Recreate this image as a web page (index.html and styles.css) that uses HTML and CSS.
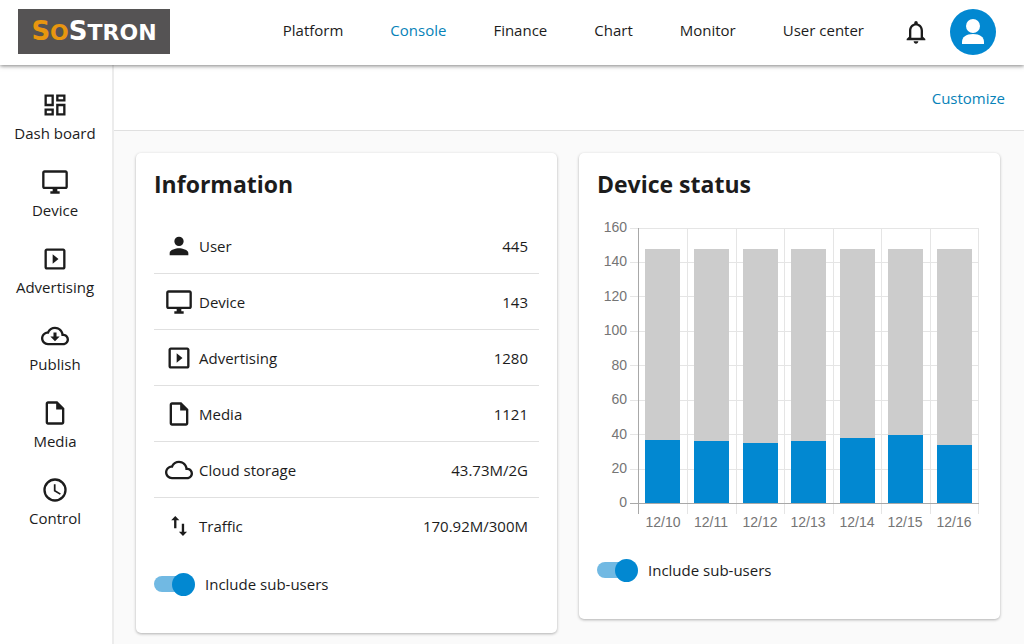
FILE: index.html
```html
<!DOCTYPE html>
<html lang="en">
<head>
<meta charset="utf-8">
<meta name="viewport" content="width=device-width, initial-scale=1">
<title>Console</title>
<link rel="stylesheet" href="styles.css">
</head>
<body>
<svg class="sprite" aria-hidden="true">
  <symbol id="i-dash" viewBox="0 0 24 24"><path d="M19 5v2h-4V5h4M9 5v6H5V5h4m10 8v6h-4v-6h4M9 17v2H5v-2h4M21 3h-8v6h8V3zM11 3H3v10h8V3zm10 8h-8v10h8V11zm-10 4H3v6h8v-6z"/></symbol>
  <symbol id="i-device" viewBox="0 0 24 24"><path d="M21 2H3c-1.100 0-2 .9-2 2v12c0 1.100.9 2 2 2h7v2H8v2h8v-2h-2v-2h7c1.100 0 2-.9 2-2V4c0-1.100-.9-2-2-2zm0 14H3V4h18v12z"/></symbol>
  <symbol id="i-play" viewBox="0 0 24 24"><path d="M10 8v8l5-4zM19 3H5c-1.100 0-2 .9-2 2v14c0 1.100.9 2 2 2h14c1.100 0 2-.9 2-2V5c0-1.100-.9-2-2-2zm0 16H5V5h14v14z"/></symbol>
  <symbol id="i-cloud" viewBox="0 0 24 24"><path d="M19.350 10.040C18.670 6.590 15.640 4 12 4 9.110 4 6.600 5.640 5.350 8.040 2.340 8.360 0 10.910 0 14c0 3.310 2.690 6 6 6h13c2.760 0 5-2.240 5-5 0-2.640-2.050-4.780-4.650-4.960zM19 18H6c-2.210 0-4-1.790-4-4s1.790-4 4-4h.71C7.370 7.690 9.480 6 12 6c3.040 0 5.500 2.460 5.500 5.500v.5H19c1.660 0 3 1.340 3 3s-1.340 3-3 3z"/></symbol>
  <symbol id="i-publish" viewBox="0 0 24 24"><use href="#i-cloud"/><path d="M13.300 9v3.500H16l-4 4-4-4h2.700V9z"/></symbol>
  <symbol id="i-file" viewBox="0 0 24 24"><path d="M14 2H6c-1.100 0-2 .9-2 2v16c0 1.100.9 2 2 2h12c1.100 0 2-.9 2-2V8l-6-6zM6 20V4h7v5h5v11H6z"/></symbol>
  <symbol id="i-clock" viewBox="0 0 24 24"><path d="M12 2a10 10 0 1 0 0 20 10 10 0 0 0 0-20zm0 18a8 8 0 1 1 0-16 8 8 0 0 1 0 16zM12.500 7H11v6l5.200 3.100.8-1.200-4.500-2.700z"/></symbol>
  <symbol id="i-user" viewBox="0 0 24 24"><path d="M12 12a4 4 0 1 0 0-8 4 4 0 0 0 0 8zm0 2c-2.670 0-8 1.340-8 4v2h16v-2c0-2.660-5.330-4-8-4z"/></symbol>
  <symbol id="i-traffic" viewBox="0 0 24 24"><path d="M16.400 17V10h-2v7h-2.500l3.500 3.500 3.500-3.500zM8.800 3.500 5.300 7h2.500v7h2V7h2.500z"/></symbol>
  <symbol id="i-bell" viewBox="0 0 24 24"><path d="M12 22c1.100 0 2-.9 2-2h-4c0 1.100.9 2 2 2zm6-6v-5c0-3.070-1.630-5.640-4.500-6.320V4a1.500 1.500 0 0 0-3 0v.68C7.640 5.360 6 7.920 6 11v5l-2 2v1h16v-1l-2-2zm-2 1H8v-6c0-2.480 1.510-4.500 4-4.500s4 2.020 4 4.500v6z"/></symbol>
</svg>

<header class="header">
  <a class="logo" href="#" aria-label="SoStron"><span class="logo-accent">S<span class="logo-small">O</span></span>S<span class="logo-small">TRON</span></a>
  <nav class="nav">
    <a href="#">Platform</a>
    <a class="active" href="#">Console</a>
    <a href="#">Finance</a>
    <a href="#">Chart</a>
    <a href="#">Monitor</a>
    <a href="#">User center</a>
  </nav>
  <button class="bell" type="button" aria-label="Notifications"><svg><use href="#i-bell"/></svg></button>
  <button class="avatar" type="button" aria-label="Account"><svg viewBox="0 0 46 46"><circle cx="23" cy="17" r="7"/><path d="M12 35v-2c0-5 4-8 11-8s11 3 11 8v2z"/></svg></button>
</header>

<div class="layout">
  <nav class="sidebar">
    <a href="#"><svg class="icon"><use href="#i-dash"/></svg>Dash board</a>
    <a href="#"><svg class="icon"><use href="#i-device"/></svg>Device</a>
    <a href="#"><svg class="icon"><use href="#i-play"/></svg>Advertising</a>
    <a href="#"><svg class="icon"><use href="#i-publish"/></svg>Publish</a>
    <a href="#"><svg class="icon"><use href="#i-file"/></svg>Media</a>
    <a href="#"><svg class="icon"><use href="#i-clock"/></svg>Control</a>
  </nav>

  <main class="main">
    <div class="toolbar"><a href="#">Customize</a></div>
    <div class="cards">
      <section class="card">
        <h2>Information</h2>
        <ul class="stats">
          <li><svg class="icon"><use href="#i-user"/></svg><span>User</span><span class="value">445</span></li>
          <li><svg class="icon"><use href="#i-device"/></svg><span>Device</span><span class="value">143</span></li>
          <li><svg class="icon"><use href="#i-play"/></svg><span>Advertising</span><span class="value">1280</span></li>
          <li><svg class="icon"><use href="#i-file"/></svg><span>Media</span><span class="value">1121</span></li>
          <li><svg class="icon"><use href="#i-cloud"/></svg><span>Cloud storage</span><span class="value">43.73M/2G</span></li>
          <li><svg class="icon"><use href="#i-traffic"/></svg><span>Traffic</span><span class="value">170.92M/300M</span></li>
        </ul>
        <label class="switch"><input type="checkbox" checked>Include sub-users</label>
      </section>

      <section class="card">
        <h2>Device status</h2>
        <svg class="chart" viewBox="0 0 385 316" role="img" aria-label="Device status by day">
          <path class="grid" d="M33 12H382M33 46H382M33 80H382M33 115H382M33 149H382M33 184H382M33 218H382M33 253H382M90 12V298M139 12V298M187 12V298M236 12V298M284 12V298M333 12V298M381 12V298"/>
          <path class="axis" d="M41 12V298M33 287H382"/>
          <g class="total">
            <rect x="48" y="33" width="35" height="254"/><rect x="97" y="33" width="35" height="254"/><rect x="146" y="33" width="35" height="254"/><rect x="194" y="33" width="35" height="254"/><rect x="243" y="33" width="35" height="254"/><rect x="291" y="33" width="35" height="254"/><rect x="340" y="33" width="35" height="254"/>
          </g>
          <g class="online">
            <rect x="48" y="224" width="35" height="63"/><rect x="97" y="225" width="35" height="62"/><rect x="146" y="227" width="35" height="60"/><rect x="194" y="225" width="35" height="62"/><rect x="243" y="222" width="35" height="65"/><rect x="291" y="219" width="35" height="68"/><rect x="340" y="229" width="35" height="58"/>
          </g>
          <g class="y-labels">
            <text x="30" y="16">160</text><text x="30" y="50">140</text><text x="30" y="85">120</text><text x="30" y="119">100</text><text x="30" y="154">80</text><text x="30" y="188">60</text><text x="30" y="223">40</text><text x="30" y="257">20</text><text x="30" y="291">0</text>
          </g>
          <g class="x-labels">
            <text x="66" y="311">12/10</text><text x="114" y="311">12/11</text><text x="163" y="311">12/12</text><text x="211" y="311">12/13</text><text x="260" y="311">12/14</text><text x="308" y="311">12/15</text><text x="357" y="311">12/16</text>
          </g>
        </svg>
        <label class="switch"><input type="checkbox" checked>Include sub-users</label>
      </section>
    </div>
  </main>
</div>
</body>
</html>
```

FILE: styles.css
```css
* {
  box-sizing: border-box;
}

body {
  margin: 0;
  min-height: 100vh;
  display: flex;
  flex-direction: column;
  background: #fafafa;
  color: #1c1c1c;
  font: 15px/20px "Open Sans", "Noto Sans", sans-serif;
}

a {
  color: inherit;
  text-decoration: none;
}

button {
  border: 0;
  padding: 0;
  background: none;
  color: inherit;
  flex: none;
}

svg {
  display: block;
  fill: currentColor;
}

.sprite {
  position: absolute;
  width: 0;
  height: 0;
}

.icon {
  width: 28px;
  height: 28px;
  flex: none;
}

/* Header */
.header {
  position: relative;
  z-index: 1;
  display: flex;
  align-items: center;
  height: 65px;
  padding: 0 28px 2px 18px;
  background: #fff;
  box-shadow: 0 1px 4px rgba(0, 0, 0, .5);
}

.logo {
  display: flex;
  align-items: baseline;
  justify-content: center;
  width: 152px;
  height: 45px;
  background: #555354;
  color: #fff;
  font: bold 26px/45px "DejaVu Sans", sans-serif;
}

.logo-accent {
  color: #e8960f;
}

.logo-small {
  font-size: 22px;
}

.nav {
  display: flex;
  gap: 47px;
  margin-left: auto;
  padding-bottom: 4px;
  white-space: nowrap;
}

.nav .active,
.toolbar a {
  color: #0782b8;
}

.bell {
  margin: 0 20px 0 38px;
}

.bell svg {
  width: 28px;
  height: 28px;
}

.avatar {
  width: 46px;
  height: 46px;
  border-radius: 50%;
  background: #0288d1;
  color: #fff;
}

/* Page frame */
.layout {
  display: flex;
  flex: 1;
}

.sidebar {
  display: flex;
  flex-direction: column;
  gap: 25px;
  width: 114px;
  flex: none;
  padding: 26px 2px 0 0;
  border-right: 2px solid #ececec;
  background: #fff;
}

.sidebar a {
  display: flex;
  flex-direction: column;
  align-items: center;
  gap: 4px;
}

.main {
  flex: 1;
  min-width: 0;
}

.toolbar {
  display: flex;
  align-items: center;
  justify-content: flex-end;
  height: 66px;
  padding: 0 19px;
  border-bottom: 1px solid #e0e0e0;
  background: #fff;
}

.cards {
  display: grid;
  grid-template-columns: 1fr 1fr;
  align-items: start;
  gap: 22px;
  padding: 22px 24px 10px 22px;
}

.card {
  padding: 15px 18px 37px;
  border-radius: 5px;
  background: #fff;
  box-shadow: 0 1px 3px rgba(0, 0, 0, .3);
}

h2 {
  margin: 0;
  font-size: 23px;
  line-height: 32px;
}

/* Information list */
.stats {
  margin: 18px 0 19px;
  padding: 0;
  list-style: none;
}

.stats li {
  display: flex;
  align-items: center;
  gap: 6px;
  height: 56px;
  padding: 0 11px;
  border-bottom: 1px solid #e0e0e0;
}

.stats li:last-child {
  height: 55px;
  border-bottom: 0;
}

.value {
  margin-left: auto;
}

/* Switch */
.switch {
  display: flex;
  align-items: center;
  gap: 10px;
}

.switch input {
  appearance: none;
  display: grid;
  align-items: center;
  width: 41px;
  height: 24px;
  margin: 0;
}

.switch input::before,
.switch input::after {
  content: "";
  grid-area: 1 / 1;
}

.switch input::before {
  width: 36px;
  height: 16px;
  border-radius: 8px;
  background: #bdbdbd;
}

.switch input::after {
  width: 23px;
  height: 23px;
  border-radius: 50%;
  background: #f5f5f5;
}

.switch input:checked::before {
  background: #71b9e3;
}

.switch input:checked::after {
  justify-self: end;
  background: #0288d1;
}

/* Chart */
.chart {
  width: 100%;
  height: auto;
  margin: 16px 0 26px;
  fill: #757575;
  font: 14px "Liberation Sans", Arial, sans-serif;
}

.grid,
.axis {
  fill: none;
  stroke: #e5e5e5;
  shape-rendering: crispEdges;
}

.axis {
  stroke: #a8a8a8;
}

.total {
  fill: #ccc;
}

.online {
  fill: #0288d1;
}

.y-labels {
  text-anchor: end;
}

.x-labels {
  text-anchor: middle;
}
```
